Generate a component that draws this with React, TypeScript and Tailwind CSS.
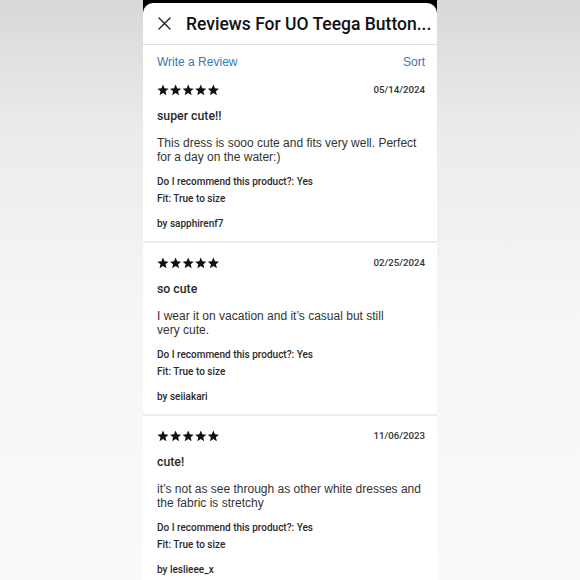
import React from "react";

type Review = {
  date: string;
  title: string;
  body: string;
  recommend: string;
  fit: string;
  author: string;
};

const REVIEWS: Review[] = [
  {
    date: "05/14/2024",
    title: "super cute!!",
    body: "This dress is sooo cute and fits very well. Perfect\nfor a day on the water:)",
    recommend: "Yes",
    fit: "True to size",
    author: "sapphirenf7",
  },
  {
    date: "02/25/2024",
    title: "so cute",
    body: "I wear it on vacation and it\u2019s casual but still\nvery cute.",
    recommend: "Yes",
    fit: "True to size",
    author: "seiiakari",
  },
  {
    date: "11/06/2023",
    title: "cute!",
    body: "it\u2019s not as see through as other white dresses and\nthe fabric is stretchy",
    recommend: "Yes",
    fit: "True to size",
    author: "leslieee_x",
  },
];

const STAR = "M6 0.6l1.55 3.75 4.05.3-3.1 2.6.97 3.95L6 9.05 2.53 11.2l.97-3.95L.4 4.65l4.05-.3z";

function Stars() {
  return (
    <svg width="63" height="12" viewBox="0 0 63 12" className="block">
      {[0, 1, 2, 3, 4].map((i) => (
        <path key={i} d={STAR} transform={`translate(${i * 12.6} 0)`} fill="#111" />
      ))}
    </svg>
  );
}

function ReviewItem({ review, last }: { review: Review; last: boolean }) {
  return (
    <div className={last ? "" : "border-b-2 border-[#ececec]"}>
      <div className="pl-[14px] pr-[12px] pt-[13px] pb-[11px]">
        <div className="flex h-[14px] items-center justify-between">
          <Stars />
          <span className="font-['Roboto',sans-serif] text-[9.7px] font-medium leading-[14px] text-[#333]">
            {review.date}
          </span>
        </div>
        <div className="mt-[12px] font-['Roboto',sans-serif] text-[12.3px] font-medium leading-[14px] text-[#2a2a2a]">
          {review.title}
        </div>
        <div className="mt-[13px] whitespace-pre-line text-[12px] leading-[14px] text-[#333]">
          {review.body}
        </div>
        <div className="mt-[12px] font-['Roboto',sans-serif] text-[10px] font-medium leading-[12px] text-[#2a2a2a]">
          Do I recommend this product?: {review.recommend}
        </div>
        <div className="mt-[5px] font-['Roboto',sans-serif] text-[10px] font-medium leading-[12px] text-[#2a2a2a]">
          Fit: {review.fit}
        </div>
        <div className="mt-[13px] font-['Roboto',sans-serif] text-[10px] font-medium leading-[12px] text-[#2a2a2a]">
          by {review.author}
        </div>
      </div>
    </div>
  );
}

export default function App() {
  return (
    <div className="h-[580px] w-[580px] overflow-hidden bg-[linear-gradient(180deg,#d8d8d8_0%,#ebebeb_22%,#f6f6f6_55%,#fafafa_100%)] font-['Liberation_Sans',Arial,sans-serif]">
      <div className="mx-auto h-full w-[294px] bg-black pt-[3px]">
        <div className="h-full rounded-t-[10px] bg-white">
          <div className="flex h-[42px] items-center border-b border-[#e0e0e0] pl-[15px]">
            <svg width="13" height="13" viewBox="0 0 13 13" className="block">
              <path d="M1 1l11 11M12 1L1 12" stroke="#222" strokeWidth="1.4" strokeLinecap="round" />
            </svg>
            <div className="ml-[15px] font-['Roboto',sans-serif] text-[17.5px] font-medium leading-[20px] text-[#111]">
              Reviews For UO Teega Button...
            </div>
          </div>
          <div className="flex h-[25px] justify-between pl-[14px] pr-[12px] pt-[10px] text-[12px] leading-[14px] text-[#3a78b2]">
            <span>Write a Review</span>
            <span>Sort</span>
          </div>
          {REVIEWS.map((r, i) => (
            <ReviewItem key={r.date} review={r} last={i === REVIEWS.length - 1} />
          ))}
        </div>
      </div>
    </div>
  );
}
